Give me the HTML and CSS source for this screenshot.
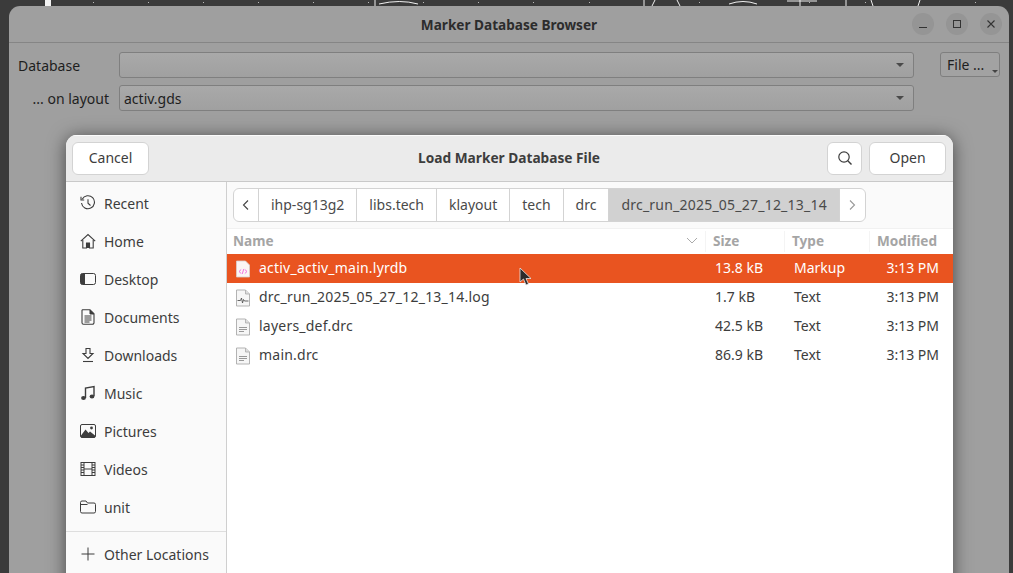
FILE: index.html
```html
<!DOCTYPE html>
<html lang="en">
<head>
<meta charset="utf-8">
<title>Load Marker Database File</title>
<link rel="stylesheet" href="styles.css">
</head>
<body>
<div class="desktop">
  <svg class="strip" width="1013" height="6" viewBox="0 0 1013 6">
    <rect x="45" y="0" width="6" height="6" fill="#f2f2f2"/>
    <g fill="none" stroke="#f0f0f0" stroke-width="1">
      <path d="M375 6V0M379 4Q400 -1 418 4"/>
      <path d="M644 6V0M652 6L655 0M677 0L680 6M729 4Q743 -1 757 4"/>
      <path d="M787 1H817M800 0V6M846 6V0M871 0L873 6M920 0L918 6"/>
    </g>
    <g fill="#bbb">
      <rect x="93" y="2" width="1" height="1"/><rect x="148" y="2" width="1" height="1"/><rect x="203" y="2" width="1" height="1"/><rect x="258" y="2" width="1" height="1"/><rect x="313" y="2" width="1" height="1"/><rect x="368" y="2" width="1" height="1"/><rect x="423" y="2" width="1" height="1"/><rect x="478" y="2" width="1" height="1"/><rect x="533" y="2" width="1" height="1"/><rect x="589" y="2" width="1" height="1"/><rect x="699" y="2" width="1" height="1"/><rect x="809" y="2" width="1" height="1"/><rect x="865" y="2" width="1" height="1"/><rect x="975" y="2" width="1" height="1"/>
    </g>
  </svg>

  <section class="parent">
    <header class="parent-title">
      <span class="parent-name">Marker Database Browser</span>
      <div class="wm">
        <span class="wm-btn"><svg width="12" height="12" viewBox="0 0 12 12"><path d="M2 9.5H10" stroke="#333" stroke-width="1"/></svg></span>
        <span class="wm-btn"><svg width="12" height="12" viewBox="0 0 12 12"><rect x="2.5" y="2.5" width="7" height="7" fill="none" stroke="#333"/></svg></span>
        <span class="wm-btn"><svg width="12" height="12" viewBox="0 0 12 12"><path d="M2.5 2.5L9.5 9.5M9.5 2.5L2.5 9.5" stroke="#333" stroke-width="1.1"/></svg></span>
      </div>
    </header>
    <div class="parent-form">
      <label class="form-label">Database</label>
      <div class="combo"><span></span><i class="caret"></i></div>
      <button class="file-btn">File ...<i class="mini-caret"></i></button>
      <label class="form-label">... on layout</label>
      <div class="combo"><span>activ.gds</span><i class="caret"></i></div>
    </div>
  </section>

  <section class="dialog">
    <header class="dlg-head">
      <div class="head-left"><button class="btn btn-cancel">Cancel</button></div>
      <h1 class="dlg-title">Load Marker Database File</h1>
      <div class="head-right">
        <button class="btn btn-search" aria-label="Search"><svg width="16" height="16" viewBox="0 0 16 16"><circle cx="7" cy="7" r="5.2" fill="none" stroke="#3d3d3d" stroke-width="1.2"/><path d="M10.8 10.8L14.5 14.5" stroke="#3d3d3d" stroke-width="1.4"/></svg></button>
        <button class="btn btn-open">Open</button>
      </div>
    </header>
    <div class="dlg-body">
      <nav class="side">
        <ul class="places">
          <li class="place"><svg class="ico" viewBox="0 0 16 16"><path d="M2.2 4.2A6.5 6.5 0 1 1 1.5 8" fill="none" stroke="#3d3d3d" stroke-width="1.1"/><path d="M1 1.8V5H4.2" fill="none" stroke="#3d3d3d" stroke-width="1.1"/><path d="M8 4.2V8.2L10.5 10.5" fill="none" stroke="#3d3d3d" stroke-width="1.1"/></svg><span class="lbl">Recent</span></li>
          <li class="place"><svg class="ico" viewBox="0 0 16 16"><path d="M0.8 8.2L8 1.5L15.2 8.2" fill="none" stroke="#3d3d3d" stroke-width="1.1"/><path d="M2.8 7V15H6.5V10H9.5V15H13.2V7" fill="none" stroke="#3d3d3d" stroke-width="1.1"/><rect x="6.5" y="10" width="3" height="5" fill="#3d3d3d"/></svg><span class="lbl">Home</span></li>
          <li class="place"><svg class="ico" viewBox="0 0 16 16"><rect x="0.5" y="2.5" width="15" height="11" rx="2" fill="none" stroke="#3d3d3d"/><path d="M2.5 2.5H5V13.5H2.5A2 2 0 0 1 0.5 11.5V4.5A2 2 0 0 1 2.5 2.5Z" fill="#3d3d3d"/></svg><span class="lbl">Desktop</span></li>
          <li class="place"><svg class="ico" viewBox="0 0 16 16"><path d="M2.5 0.8H10L14 4.8V13.7A1.5 1.5 0 0 1 12.5 15.2H3.5A1.5 1.5 0 0 1 2 13.7V1.3Z" fill="none" stroke="#3d3d3d" stroke-width="1.1"/><path d="M10 1V5H14" fill="#3d3d3d" stroke="#3d3d3d"/><path d="M4.5 7H11.5M4.5 9H11.5M4.5 11H11.5M4.5 13H9.5" stroke="#3d3d3d"/></svg><span class="lbl">Documents</span></li>
          <li class="place"><svg class="ico" viewBox="0 0 16 16"><path d="M6 1.5H10V6.5H13L8 11.5L3 6.5H6Z" fill="none" stroke="#3d3d3d" stroke-width="1.1"/><path d="M3 14.5H13" stroke="#3d3d3d" stroke-width="1.1"/></svg><span class="lbl">Downloads</span></li>
          <li class="place"><svg class="ico" viewBox="0 0 16 16"><path d="M5.5 13V3L14 1.5V11" fill="none" stroke="#3d3d3d" stroke-width="1.4"/><ellipse cx="3.5" cy="13" rx="2.4" ry="2" fill="#3d3d3d"/><ellipse cx="12" cy="11.5" rx="2.4" ry="2" fill="#3d3d3d"/></svg><span class="lbl">Music</span></li>
          <li class="place"><svg class="ico" viewBox="0 0 16 16"><rect x="0.5" y="1.5" width="15" height="13" rx="1.5" fill="none" stroke="#3d3d3d"/><path d="M1 12.5L5.5 6.5L8.5 10L10 8.5L15 12.5V14.5H1Z" fill="#3d3d3d"/><circle cx="11.5" cy="5" r="1.4" fill="#3d3d3d"/></svg><span class="lbl">Pictures</span></li>
          <li class="place"><svg class="ico" viewBox="0 0 16 16"><rect x="1" y="1.5" width="14" height="13" fill="none" stroke="#3d3d3d"/><path d="M4 1.5V14.5M12 1.5V14.5M4 8H12" stroke="#3d3d3d"/><path d="M1 4H4M1 6.5H4M1 9H4M1 11.5H4M12 4H15M12 6.5H15M12 9H15M12 11.5H15" stroke="#3d3d3d"/></svg><span class="lbl">Videos</span></li>
          <li class="place"><svg class="ico" viewBox="0 0 16 16"><path d="M0.5 3.5A1.5 1.5 0 0 1 2 2H6L7.5 4H14A1.5 1.5 0 0 1 15.5 5.5V12.5A1.5 1.5 0 0 1 14 14H2A1.5 1.5 0 0 1 0.5 12.5ZM0.5 5.5H7.5" fill="none" stroke="#3d3d3d"/></svg><span class="lbl">unit</span></li>
        </ul>
        <div class="side-sep"></div>
        <div class="place"><svg class="ico" viewBox="0 0 16 16"><path d="M8 1.5V14.5M1.5 8H14.5" stroke="#3d3d3d"/></svg><span class="lbl">Other Locations</span></div>
      </nav>
      <main class="files">
        <div class="path-row">
          <div class="pathbar">
            <span class="crumb arrow"><svg width="10" height="12" viewBox="0 0 10 12"><path d="M7 1.5L2.5 6L7 10.5" fill="none" stroke="#444" stroke-width="1.1"/></svg></span>
            <span class="crumb">ihp-sg13g2</span>
            <span class="crumb">libs.tech</span>
            <span class="crumb">klayout</span>
            <span class="crumb">tech</span>
            <span class="crumb">drc</span>
            <span class="crumb current">drc_run_2025_05_27_12_13_14</span>
            <span class="crumb arrow"><svg width="10" height="12" viewBox="0 0 10 12"><path d="M3 1.5L7.5 6L3 10.5" fill="none" stroke="#999" stroke-width="1.1"/></svg></span>
          </div>
        </div>
        <div class="cols">
          <span class="col col-name"><span>Name</span><svg class="sort" width="12" height="7" viewBox="0 0 12 7"><path d="M1 1L6 6L11 1" fill="none" stroke="#aaa" stroke-width="1"/></svg></span>
          <span class="col">Size</span>
          <span class="col">Type</span>
          <span class="col">Modified</span>
        </div>
        <div class="row selected">
          <span class="cell-name"><svg class="fico" viewBox="0 0 16 18"><path d="M1.5 1H10.5L14.5 5V17H1.5Z" fill="#fbf5f5" stroke="#d8cfcf" stroke-width="0.8"/><path d="M6.2 9.5L4 11.5L6.2 13.5M9.8 9.5L12 11.5L9.8 13.5M8.8 9L7.2 14" fill="none" stroke="#f062e0" stroke-width="0.9"/></svg><span class="lbl">activ_activ_main.lyrdb</span></span>
          <span class="cell-size">13.8 kB</span><span class="cell-type">Markup</span><span class="cell-mod">3:13 PM</span>
        </div>
        <div class="row">
          <span class="cell-name"><svg class="fico" viewBox="0 0 16 18"><path d="M1.5 1H10.5L14.5 5V17H1.5Z" fill="#f6f6f6" stroke="#aaa" stroke-width="0.9"/><path d="M10.5 1V5H14.5" fill="#ddd" stroke="#aaa" stroke-width="0.8"/><path d="M2.5 11.5H5.5L6.5 9L7.5 14L8.5 10.5L9.5 12H13.5" fill="none" stroke="#555" stroke-width="0.9"/></svg><span class="lbl">drc_run_2025_05_27_12_13_14.log</span></span>
          <span class="cell-size">1.7 kB</span><span class="cell-type">Text</span><span class="cell-mod">3:13 PM</span>
        </div>
        <div class="row">
          <span class="cell-name"><svg class="fico" viewBox="0 0 16 18"><path d="M1.5 1H10.5L14.5 5V17H1.5Z" fill="#f6f6f6" stroke="#aaa" stroke-width="0.9"/><path d="M10.5 1V5H14.5" fill="#ddd" stroke="#aaa" stroke-width="0.8"/><path d="M4 9.5H12M4 11.5H12M4 13.5H9" stroke="#999"/></svg><span class="lbl">layers_def.drc</span></span>
          <span class="cell-size">42.5 kB</span><span class="cell-type">Text</span><span class="cell-mod">3:13 PM</span>
        </div>
        <div class="row">
          <span class="cell-name"><svg class="fico" viewBox="0 0 16 18"><path d="M1.5 1H10.5L14.5 5V17H1.5Z" fill="#f6f6f6" stroke="#aaa" stroke-width="0.9"/><path d="M10.5 1V5H14.5" fill="#ddd" stroke="#aaa" stroke-width="0.8"/><path d="M4 9.5H12M4 11.5H12M4 13.5H9" stroke="#999"/></svg><span class="lbl">main.drc</span></span>
          <span class="cell-size">86.9 kB</span><span class="cell-type">Text</span><span class="cell-mod">3:13 PM</span>
        </div>
      </main>
    </div>
  </section>

  <svg class="pointer" width="14" height="20" viewBox="0 0 14 20"><path d="M1 1V15L4.5 12L7 18L9.5 17L7 11.5H12Z" fill="#2b2b2b" stroke="#e8e8e8" stroke-width="0.8"/></svg>
</div>
</body>
</html>
```
FILE: styles.css
```css
* { box-sizing: border-box; }
html, body { margin: 0; height: 100%; }
body { overflow: hidden; font-family: "Noto Sans", "Open Sans", sans-serif; font-size: 14px; color: #3d3d3d; }
.desktop { position: relative; width: 1013px; height: 573px; background: #3b3b3b; overflow: hidden; }
.strip { display: block; }

.parent { margin: 0 4px 0 9px; height: 567px; background: #9f9f9f; border-radius: 11px 11px 0 0; }
.parent-title { height: 37px; display: flex; align-items: center; justify-content: center; position: relative; border-bottom: 1px solid #858585; }
.parent-name { font-weight: 700; font-size: 13.6px; color: #2c2c2c; }
.wm { position: absolute; right: 7px; top: 7px; display: flex; gap: 12px; }
.wm-btn { width: 22px; height: 22px; border-radius: 50%; background: #959595; display: flex; align-items: center; justify-content: center; }

.parent-form { display: grid; grid-template-columns: 101px 795px 86px; grid-auto-rows: 26px; row-gap: 7px; padding: 9px 0 0 9px; align-items: center; }
.form-label { text-align: right; padding-right: 10px; color: #1e1e1e; white-space: nowrap; }
.form-label:first-child { text-align: left; padding-right: 0; }
.combo { height: 26px; border: 1px solid #7f7f7f; border-radius: 3px; background: linear-gradient(#a9a9a9, #a0a0a0); display: flex; align-items: center; justify-content: space-between; padding: 0 9px 0 4px; color: #1e1e1e; }
.caret { width: 0; height: 0; border-left: 4px solid transparent; border-right: 4px solid transparent; border-top: 4px solid #4a4a4a; }
.file-btn { justify-self: end; position: relative; width: 60px; height: 25px; align-self: start; padding: 0 0 0 6px; text-align: left; font: inherit; color: #1e1e1e; background: #a2a2a2; border: 1px solid #7f7f7f; border-radius: 3px; }
.mini-caret { position: absolute; right: 1px; bottom: 3px; width: 0; height: 0; border-left: 3px solid transparent; border-right: 3px solid transparent; border-top: 3px solid #444; }

.dialog { position: absolute; left: 66px; top: 135px; width: 887px; height: 460px; background: #fafafa; border-radius: 11px 11px 0 0; box-shadow: 0 2px 18px rgba(0,0,0,.55); overflow: hidden; display: flex; flex-direction: column; }
.dlg-head { height: 47px; flex: none; display: grid; grid-template-columns: 1fr auto 1fr; align-items: center; padding: 0 7px 1px 6px; background: #ebebeb; border-top: 1px solid #fbfbfb; border-bottom: 1px solid #c9c9c9; }
.head-left { display: flex; }
.head-right { display: flex; justify-content: flex-end; gap: 7px; }
.dlg-title { margin: 0; padding-bottom: 2px; font-size: 13.7px; font-weight: 700; color: #3d3d3d; }
.btn { height: 33px; background: #fff; border: 1px solid #d3d3d3; border-radius: 6px; font: inherit; color: #3d3d3d; padding: 0 0 2px; display: flex; align-items: center; justify-content: center; }
.btn-cancel { width: 77px; }
.btn-search { width: 35px; padding: 0; }
.btn-open { width: 77px; }

.dlg-body { flex: 1; display: flex; min-height: 0; }
.side { width: 161px; flex: none; border-right: 1px solid #cfcfcf; background: #fafafa; padding-top: 2px; }
.places { list-style: none; margin: 0; padding: 0; }
.place { height: 38px; display: flex; align-items: center; padding-left: 14px; gap: 8px; color: #3d3d3d; white-space: nowrap; }
.ico { width: 16px; height: 16px; flex: none; }
.side-sep { height: 1px; background: #dedede; margin-top: 5px; margin-bottom: 3px; }

.files { flex: 1; min-width: 0; background: #fff; }
.path-row { height: 47px; padding: 6px 6px 0; background: #fafafa; border-bottom: 1px solid #f1f1f1; }
.pathbar { display: inline-flex; height: 34px; border: 1px solid #d3d3d3; border-radius: 6px; background: #fff; overflow: hidden; }
.crumb { display: flex; align-items: center; padding: 0 12px 2px; border-right: 1px solid #d3d3d3; white-space: nowrap; color: #4a4a4a; }
.crumb:last-child { border-right: 0; }
.crumb.arrow { width: 25px; padding: 0; justify-content: center; }
.crumb.current { background: #d1d1d1; letter-spacing: .22px; }

.cols, .row { display: grid; grid-template-columns: 478px 79px 85px 84px; }
.cols { height: 25px; align-items: center; font-weight: 700; font-size: 13.6px; color: #a5a5a5; }
.col { padding: 0 0 2px 7px; border-left: 1px solid #f4f4f4; }
.col-name { padding: 0 7px 2px 6px; border-left: 0; display: flex; align-items: center; justify-content: space-between; }
.row { height: 29px; align-items: center; color: #3d3d3d; padding-bottom: 2px; }
.row.selected { background: #e95420; color: #fff; }
.cell-name { display: flex; align-items: center; gap: 8px; padding-left: 8px; white-space: nowrap; letter-spacing: .22px; }
.fico { width: 16px; height: 18px; flex: none; position: relative; top: 1px; }
.cell-size { padding-left: 10px; }
.cell-type { padding-left: 10px; }
.cell-mod { text-align: right; padding-right: 14px; }

.pointer { position: absolute; left: 519px; top: 267px; }
```
